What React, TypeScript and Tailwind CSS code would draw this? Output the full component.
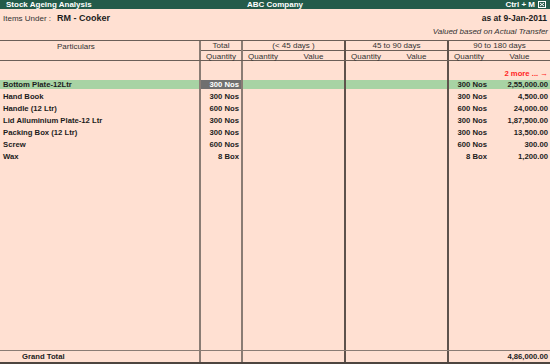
const items = [
  { name: 'Bottom Plate-12Ltr', total: '300 Nos', qty: '300 Nos', value: '2,55,000.00', selected: true },
  { name: 'Hand Book', total: '300 Nos', qty: '300 Nos', value: '4,500.00' },
  { name: 'Handle (12 Ltr)', total: '600 Nos', qty: '600 Nos', value: '24,000.00' },
  { name: 'Lid Alluminium Plate-12 Ltr', total: '300 Nos', qty: '300 Nos', value: '1,87,500.00' },
  { name: 'Packing Box (12 Ltr)', total: '300 Nos', qty: '300 Nos', value: '13,500.00' },
  { name: 'Screw', total: '600 Nos', qty: '600 Nos', value: '300.00' },
  { name: 'Wax', total: '8 Box', qty: '8 Box', value: '1,200.00' },
];

const rowGrid = 'grid grid-cols-[199px_42px_42px_61px_42px_61px_42px_61px]';
const lineA = 'border-l-2 border-[#8a7c74]';
const lineB = 'border-l-2 border-[#5e524c]';

// border class per grid column index
const colLine = ['', lineA, lineA, '', lineB, '', lineB, ''];

export default function App() {
  return (
    <div className="w-[550px] h-[364px] flex flex-col bg-[#ffe0d2] text-[#1c1c1c] font-['Liberation_Sans',Arial,sans-serif] overflow-hidden">
      {/* Title bar */}
      <div className="h-[9px] bg-[#235b4a] text-white text-[8px] font-bold leading-[9px] flex items-center px-[6px]">
        <span className="flex-1">Stock Ageing Analysis</span>
        <span className="flex-1 text-center">ABC Company</span>
        <span className="flex-1 flex justify-end items-center gap-[3px]">
          <span>Ctrl + M</span>
          <svg width="8" height="7" viewBox="0 0 8 7" className="mr-[-2px]">
            <rect x="0.5" y="0.5" width="7" height="6" fill="none" stroke="white" strokeWidth="1" />
            <path d="M2 2 L6 5 M6 2 L2 5" stroke="white" strokeWidth="1" />
          </svg>
        </span>
      </div>

      {/* Info area */}
      <div className="h-[31px] flex flex-col px-[3px] pt-[3px]">
        <div className="flex items-baseline justify-between h-[13px]">
          <div className="flex items-baseline">
            <span className="text-[8px] text-[#333]">Items Under :</span>
            <span className="text-[9px] font-bold ml-[6px]">RM - Cooker</span>
          </div>
          <span className="text-[8.5px] font-bold mr-[0px]">as at 9-Jan-2011</span>
        </div>
        <div className="text-right italic text-[8px] text-[#333] mt-[2px] leading-[10px] mr-[-1px]">
          Valued based on Actual Transfer
        </div>
      </div>

      {/* Column headers */}
      <div className="flex border-t border-b border-[#6b5f58] text-[8px] text-[#333] h-[21px] leading-[9px]">
        <div className="w-[199px] pl-[57px] pt-[1px]">Particulars</div>
        <div className={`w-[42px] flex flex-col ${lineA}`}>
          <div className="h-[9px] text-center border-b border-[#6b5f58] h-[10px]">Total</div>
          <div className="text-center pt-[1px]">Quantity</div>
        </div>
        {['(< 45 days )', '45 to 90 days', '90 to 180 days'].map((label, i) => (
          <div key={label} className={`w-[103px] flex flex-col ${i === 0 ? lineA : lineB}`}>
            <div className="h-[10px] text-center border-b border-[#6b5f58]">{label}</div>
            <div className="flex pt-[1px]">
              <span className="w-[40px] text-center">Quantity</span>
              <span className="flex-1 text-center">Value</span>
            </div>
          </div>
        ))}
      </div>

      {/* Body */}
      <div className="flex-1 flex flex-col text-[7.7px] font-bold">
        <div className={`${rowGrid} h-[8px]`}>
          {colLine.map((c, i) => <div key={i} className={c} />)}
        </div>
        <div className={`${rowGrid} h-[9px] leading-[9px]`}>
          {colLine.map((c, i) => (
            <div key={i} className={c}>
              {i === 7 && (
                <div className="text-right pr-[2px] text-[#ff1f1f] whitespace-nowrap ml-[-30px]">2 more ... →</div>
              )}
            </div>
          ))}
        </div>

        {items.map((item) => {
          const cells = [item.name, item.total, '', '', '', '', item.qty, item.value];
          return (
            <div key={item.name} className={`${rowGrid} h-[12px]`}>
              {cells.map((text, i) => (
                <div key={i} className={`${colLine[i]} flex items-end pb-[1px]`}>
                  <div
                    className={`w-full h-[9px] leading-[9px] whitespace-nowrap ${
                      i === 0 ? 'pl-[3px]' : 'text-right pr-[2px]'
                    } ${
                      item.selected
                        ? i === 1
                          ? 'bg-[#6f6f6f] text-white'
                          : 'bg-[#a8d3a4]'
                        : ''
                    }`}
                  >
                    {text}
                  </div>
                </div>
              ))}
            </div>
          );
        })}

        <div className={`${rowGrid} flex-1`}>
          {colLine.map((c, i) => <div key={i} className={c} />)}
        </div>
      </div>

      {/* Grand total */}
      <div className={`${rowGrid} h-[14px] border-t border-[#8a7c74] border-b-2 border-b-[#4e4540] text-[7.7px] font-bold leading-[11px]`}>
        {colLine.map((c, i) => (
          <div key={i} className={c}>
            {i === 0 && <span className="pl-[22px]">Grand Total</span>}
            {i === 7 && <div className="text-right pr-[2px]">4,86,000.00</div>}
          </div>
        ))}
      </div>
    </div>
  );
}
